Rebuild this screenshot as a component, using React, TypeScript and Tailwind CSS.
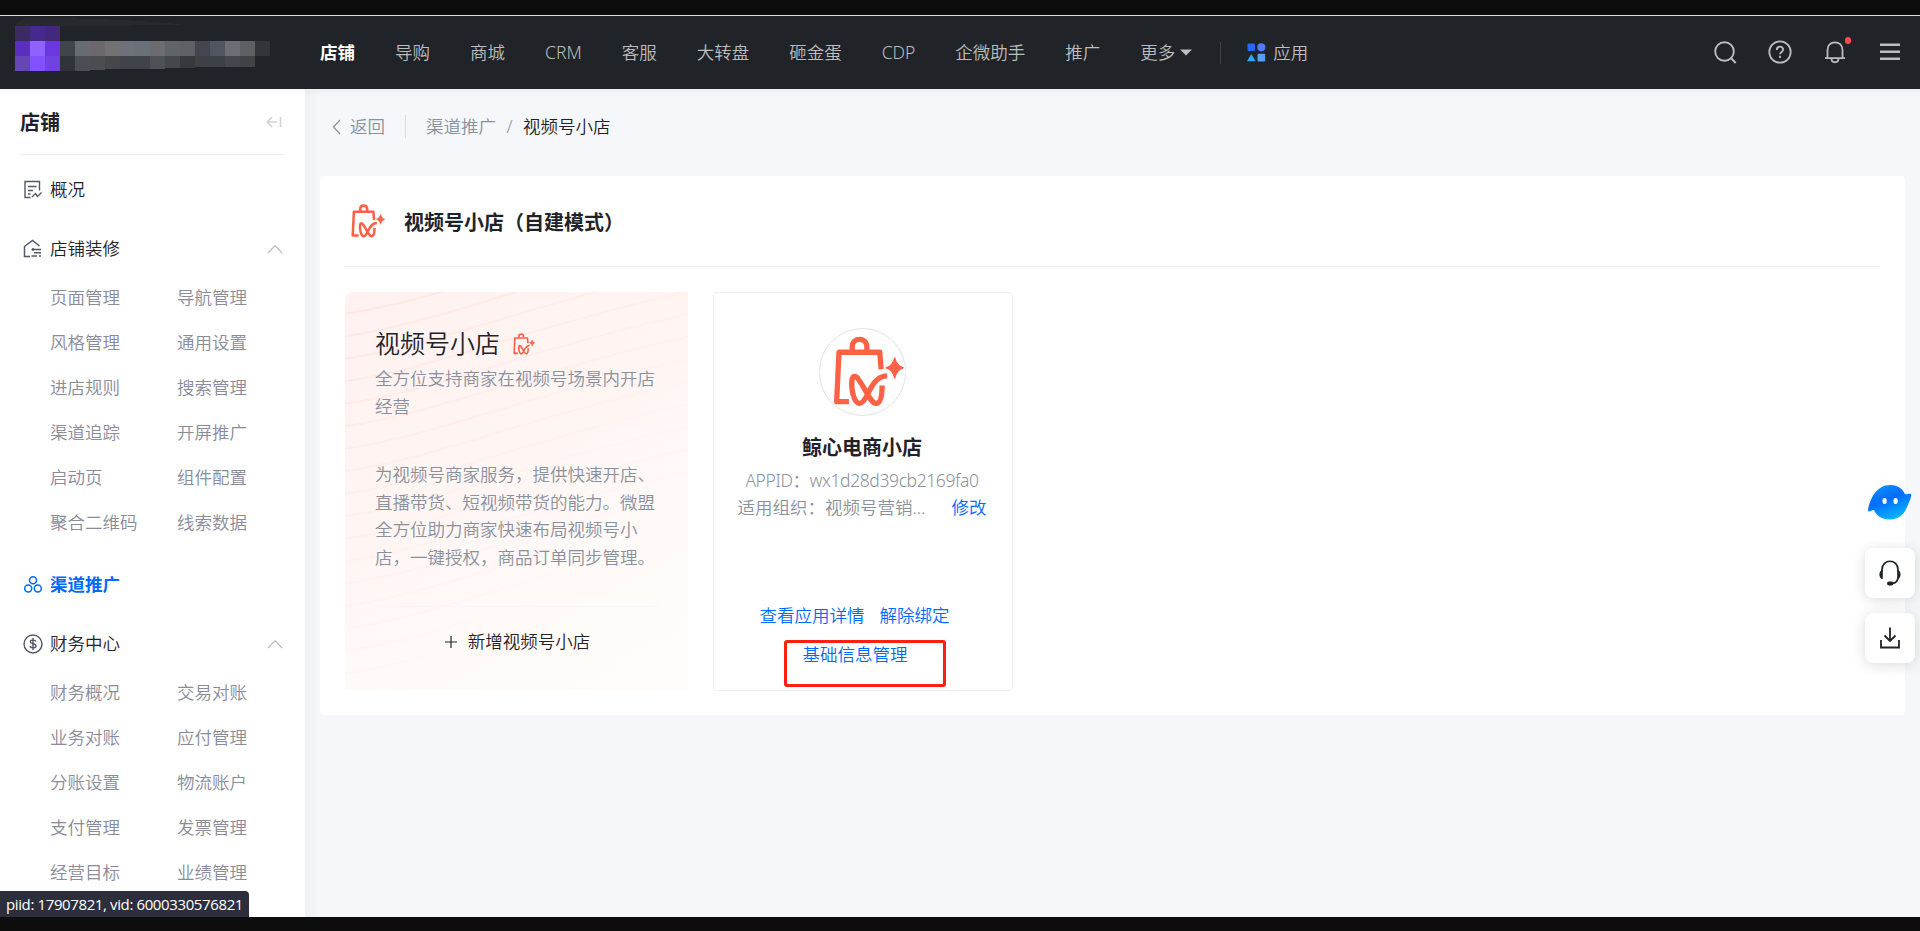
import { clsx } from 'clsx'

const NAV_LEFT = ['店铺', '导购', '商城', 'CRM', '客服', '大转盘', '砸金蛋', 'CDP', '企微助手', '推广']

const SHOP_ITEMS = [
  '页面管理', '导航管理',
  '风格管理', '通用设置',
  '进店规则', '搜索管理',
  '渠道追踪', '开屏推广',
  '启动页', '组件配置',
  '聚合二维码', '线索数据',
]

const FINANCE_ITEMS = [
  '财务概况', '交易对账',
  '业务对账', '应付管理',
  '分账设置', '物流账户',
  '支付管理', '发票管理',
  '经营目标', '业绩管理',
]

// x, y, fill, height
const LOGO_CELLS: [number, number, string, number][] = [
  [0, 0, '#3a2a66', 15], [15, 0, '#46298c', 15], [30, 0, '#42297c', 15],
  [0, 15, '#592ebd', 15], [15, 15, '#8f63ff', 15], [30, 15, '#6b38e0', 15],
  [0, 30, '#6446b8', 15], [15, 30, '#8350ff', 15], [30, 30, '#7042e0', 15],
  [45, 15, '#40454b', 15], [60, 15, '#686b71', 15], [75, 15, '#6c686d', 15], [90, 15, '#737273', 15],
  [105, 15, '#6f717a', 15], [120, 15, '#6b6f77', 15], [135, 15, '#6c6b6f', 15], [150, 15, '#606469', 15],
  [165, 15, '#5f6265', 15], [180, 15, '#43464f', 15], [195, 15, '#50555f', 15], [210, 15, '#6b6e73', 15],
  [225, 15, '#5f6063', 15], [240, 15, '#32353a', 15],
  [45, 30, '#31333b', 15], [60, 30, '#4b4f55', 15], [75, 30, '#4c4d51', 14], [90, 30, '#45474b', 13],
  [105, 30, '#40434a', 13], [120, 30, '#404349', 13], [135, 30, '#4d5054', 13], [150, 30, '#45474a', 12],
  [165, 30, '#36393d', 12], [180, 30, '#3d4045', 11], [195, 30, '#3d4047', 11], [210, 30, '#44474d', 11],
  [225, 30, '#404246', 11],
]

const WAVES = Array.from({ length: 20 }, (_, i) => 22 + i * 22.5)

function BagIcon({ className }: { className?: string }) {
  return (
    <svg viewBox="398 166 214 214" className={className} fill="none" stroke="#ff6146" strokeWidth="16" strokeLinejoin="round">
      <path d="M446 364H409L416 215H539L543 266" />
      <path d="M456 212V198C456 169 500 169 500 198V212" />
      <path d="M561 286C530 286 515 316 503 340C493 360 485 370 477 369C460 367 452 322 455 300C457 284 467 285 475 297C486 312 497 333 507 350C516 364 521 370 529 369C543 367 546 340 546 315" />
      <path d="M584 231Q590 256 611 262Q590 268 584 294Q578 268 557 262Q578 256 584 231Z" fill="#ff6146" stroke="#ff6146" strokeWidth="3" />
    </svg>
  )
}

function Chevron() {
  return (
    <svg width="16" height="10" viewBox="0 0 16 10" fill="none" stroke="#b9bac4" strokeWidth="1.1">
      <path d="M1 9L8 1.5L15 9" />
    </svg>
  )
}

function OverviewIcon() {
  return (
    <svg width="20" height="20" viewBox="0 0 20 20" fill="none" stroke="#55566a" strokeWidth="1.4">
      <path d="M7.5 17.5H2V1.5H16.5V10.5M5 6.5H13.5M5 10.5H10M5 14H7.5" />
      <path d="M9 17L12.5 13.5L14.5 16.5L18.5 12.5" />
    </svg>
  )
}

function HouseIcon() {
  return (
    <svg width="20" height="20" viewBox="0 0 20 20" fill="none" stroke="#55566a" strokeWidth="1.5">
      <path d="M7 17.5H1.5V7.5L9.5 1.5L16.5 7" />
      <path d="M8.5 10.5H18M11 13.8H18M8.5 17H14M16 17H18M10 9V12" />
    </svg>
  )
}

function ChannelIcon() {
  return (
    <svg width="20" height="20" viewBox="0 0 20 20" fill="none" stroke="#006aff" strokeWidth="1.5">
      <circle cx="10" cy="5.3" r="3.5" />
      <circle cx="5.2" cy="13.6" r="3.5" />
      <circle cx="14.8" cy="13.6" r="3.5" />
    </svg>
  )
}

function MoneyIcon() {
  return (
    <svg width="20" height="20" viewBox="0 0 20 20" fill="none" stroke="#55566a" strokeWidth="1.4">
      <circle cx="10" cy="10" r="9" />
      <path d="M13 7.5C12.5 5.8 7.3 5.3 7.3 7.8C7.3 10.3 13 9.2 13 12C13 14.6 7.5 14.3 7 12.2M10 4V16" />
    </svg>
  )
}

function MenuTitle({ icon, label, active, open }: { icon: React.ReactNode; label: string; active?: boolean; open?: boolean }) {
  return (
    <div className="mt-[14px] flex h-[45px] items-center pr-[2px] pl-[3px]">
      {icon}
      <span className={clsx('ml-[7px] flex-1', active ? 'font-bold text-[#006aff]' : 'text-[#1f2329]')}>{label}</span>
      {open && <Chevron />}
    </div>
  )
}

function SubMenu({ items }: { items: string[] }) {
  return (
    <div className="mt-1 grid grid-cols-[127px_1fr] pb-[3px] pl-[30px] text-[#8a8b9b]">
      {items.map(item => <span key={item} className="h-[45px] leading-[45px]">{item}</span>)}
    </div>
  )
}

function Header() {
  return (
    <header className="flex h-[73px] shrink-0 items-center bg-[#202327] text-[17.5px] text-[#bcbdbe]">
      <svg className="-mt-4 ml-[15px] shrink-0" width="270" height="53" viewBox="0 -8 270 53" shapeRendering="crispEdges">
        <path d="M0 0Q6 -8 14 -8Q110 -8 170 -1L60 0Z" fill="#28292c" />
        {LOGO_CELLS.map(([x, y, fill, h]) => <rect key={`${x}-${y}`} x={x} y={y} width="15" height={h} fill={fill} />)}
      </svg>
      <nav className="ml-[35px] flex items-center gap-10 whitespace-nowrap">
        {NAV_LEFT.map((label, i) => (
          <a key={label} className={clsx(i === 0 && 'font-bold text-white')}>{label}</a>
        ))}
        <a className="flex items-center">
          更多
          <svg className="ml-[5px]" width="12" height="7" viewBox="0 0 12 7"><path d="M0 0.5H12L6 6.5Z" fill="#bcbdbe" /></svg>
        </a>
      </nav>
      <div className="ml-7 h-[22px] w-px bg-[#3e4145]" />
      <svg className="ml-[26px]" width="19" height="19" viewBox="0 0 19 19">
        <rect x="0.5" y="0.5" width="7.5" height="7.5" rx="1" fill="#2468ff" />
        <circle cx="14.3" cy="4.3" r="4.1" fill="#4d7dff" />
        <path d="M4.3 11L8.6 18.3H0Z" fill="#2fa8ff" />
        <rect x="10.5" y="10.7" width="7.7" height="7.7" rx="1" fill="#55a0ff" />
      </svg>
      <a className="ml-[7px]">应用</a>

      <div className="mr-5 mb-[2px] ml-auto flex items-center text-[#bcbdbe]">
        <svg width="24" height="24" viewBox="0 0 24 24" fill="none" stroke="currentColor" strokeWidth="1.9">
          <circle cx="11.5" cy="11.5" r="9.3" />
          <path d="M17.5 17.5L22.7 23" />
        </svg>
        <svg className="ml-[31px]" width="24" height="24" viewBox="0 0 24 24" fill="none" stroke="currentColor" strokeWidth="1.8">
          <circle cx="12" cy="12" r="10.7" />
          <path d="M8.8 10C8.8 5.6 15.2 5.8 15.2 9.6C15.2 12 12 11.8 12 14.3M12 15.8V18" />
        </svg>
        <div className="relative ml-[31px]">
          <svg width="24" height="24" viewBox="0 0 24 24" fill="none" stroke="currentColor" strokeWidth="1.8">
            <path d="M2 18.2H22M4.5 18V10C4.5 -0.3 19.5 -0.3 19.5 10V18M8.5 18.5C8.5 23.5 15.5 23.5 15.5 18.5" />
          </svg>
          <span className="absolute -top-[3px] left-[22px] h-[7px] w-[6px] rounded-full bg-[#ff4a4a]" />
        </div>
        <svg className="ml-[33px]" width="20" height="18" viewBox="0 0 20 18" fill="#bcbdbe">
          <path d="M0 0.5H20V3H0ZM0 7.5H20V10H0ZM0 14.5H20V17H0Z" />
        </svg>
      </div>
    </header>
  )
}

function Sidebar() {
  return (
    <aside className="relative w-[305px] shrink-0 overflow-hidden bg-white px-5">
      <div className="flex h-[66px] items-center justify-between border-b border-[#f0f0f3] pr-[3px]">
        <h2 className="pt-[2px] text-xl font-bold text-[#1f2329]">店铺</h2>
        <svg width="16" height="12" viewBox="0 0 16 12" fill="none" stroke="#d3d3d6" strokeWidth="1.7">
          <path d="M11 6H1.5M6 1L1.3 6L6 11M14.5 1V11" />
        </svg>
      </div>
      <div className="-mt-[2px]">
        <MenuTitle icon={<OverviewIcon />} label="概况" />
        <MenuTitle icon={<HouseIcon />} label="店铺装修" open />
        <SubMenu items={SHOP_ITEMS} />
        <MenuTitle icon={<ChannelIcon />} label="渠道推广" active />
        <MenuTitle icon={<MoneyIcon />} label="财务中心" open />
        <SubMenu items={FINANCE_ITEMS} />
      </div>
    </aside>
  )
}

function IntroCard() {
  return (
    <section className="relative h-[398px] w-[343px] overflow-hidden rounded-tl-lg bg-[linear-gradient(150deg,#fff2f0_0%,#fff5f3_40%,#fffaf8_72%,#fffdfb_100%)]">
      <svg className="absolute inset-0" width="343" height="398" viewBox="0 0 343 398" fill="none">
        <defs>
          <linearGradient id="wave" gradientUnits="userSpaceOnUse" x1="0" y1="0" x2="240" y2="300">
            <stop offset="0" stopColor="#ffdfda" stopOpacity="0.6" />
            <stop offset="0.5" stopColor="#ffe4e0" stopOpacity="0.3" />
            <stop offset="1" stopColor="#fff0ee" stopOpacity="0.05" />
          </linearGradient>
        </defs>
        {WAVES.map(y => (
          <path key={y} d={`M-2 ${y}C50 ${y - 7} 110 ${y - 26} 170 ${y - 44}S290 ${y - 78} 345 ${y - 90}`} stroke="url(#wave)" strokeWidth="2.2" />
        ))}
      </svg>
      <div className="relative px-[30px] pt-[31px]">
        <div className="flex h-10 items-center">
          <h3 className="text-[25px] text-[#1f2329]">视频号小店</h3>
          <BagIcon className="mt-[2px] ml-[13px] h-[22px] w-[22px]" />
        </div>
        <p className="mt-[2px] h-[65px] leading-[27.5px] text-[#8a909c]">全方位支持商家在视频号场景内开店经营</p>
        <div className="h-px bg-[#f5f7fc]" />
        <p className="mt-[30px] leading-[27.5px] whitespace-nowrap text-[#8a909c]">
          为视频号商家服务，提供快速开店、<br />
          直播带货、短视频带货的能力。微盟<br />
          全方位助力商家快速布局视频号小<br />
          店，一键授权，商品订单同步管理。
        </p>
        <div className="mt-[35px] flex h-[70px] items-center justify-center border-t border-[#f5f7fc] pl-[2px] text-[#1f2329]">
          <svg className="mr-[11px]" width="12" height="12" viewBox="0 0 12 12" stroke="#1f2329" strokeWidth="1.2"><path d="M6 0V12M0 6H12" /></svg>
          新增视频号小店
        </div>
      </div>
    </section>
  )
}

function ShopCard() {
  return (
    <section className="relative ml-[25px] flex h-[399px] w-[300px] flex-col items-center rounded-sm border border-[#f0f0f2] pr-[2px]">
      <div className="mt-[35px] flex h-[88px] w-[87px] shrink-0 items-center justify-center rounded-full border border-[#e3e3e5]">
        <BagIcon className="-mt-px ml-[12px] h-[71px] w-[71px] shrink-0" />
      </div>
      <h3 className="mt-[17px] text-xl leading-[30px] font-bold text-[#1f2329]">鲸心电商小店</h3>
      <p className="mt-[4px] leading-[27px] tracking-[-0.4px] text-[#8a909c]">APPID：wx1d28d39cb2169fa0</p>
      <p className="flex leading-[27px] whitespace-nowrap text-[#8a909c]">
        <span className="w-[214px]">适用组织：视频号营销...</span>
        <a className="text-[#006aff]">修改</a>
      </p>
      <div className="mt-[81px] mr-[15px] flex gap-[15px] leading-[27px] text-[#006aff]">
        <a>查看应用详情</a>
        <a>解除绑定</a>
      </div>
      <a className="mt-[12px] mr-[14px] leading-[27px] text-[#006aff]">基础信息管理</a>
      <span className="absolute top-[347px] left-[70px] h-[47px] w-[162px] rounded-[3px] border-[3px] border-[#ff1e12]" />
    </section>
  )
}

function FloatTools() {
  return (
    <div className="absolute top-[484px] right-[5px] flex w-[50px] flex-col">
      <svg className="ml-[2px]" width="45" height="36" viewBox="0 0 45 36">
        <defs>
          <linearGradient id="pet" x1="0.2" y1="0.1" x2="0.6" y2="1">
            <stop offset="0" stopColor="#0a8bff" />
            <stop offset="0.4" stopColor="#006cff" />
            <stop offset="1" stopColor="#08b8ff" />
          </linearGradient>
        </defs>
        <path d="M1 26C3 14 10 1 23 1C30 1 35 4 38 10C41 11 43 9 44 10C45 11 43 17 40 23C37 31 31 35.500 22.500 35.500C15 35.500 9.500 32 7 26C5 26 3 28 1.500 27.500Z" fill="url(#pet)" />
        <rect x="15.500" y="14" width="4.200" height="6" rx="2" fill="#fff" />
        <rect x="26.500" y="14" width="4.200" height="6" rx="2" fill="#fff" />
      </svg>
      <button className="mt-7 flex h-[50px] items-center justify-center rounded-lg bg-white shadow-[0_2px_14px_rgba(0,0,0,0.14)]">
        <svg width="24" height="26" viewBox="0 0 24 26" fill="none" stroke="#202327" strokeWidth="1.7">
          <path d="M4 12V9.500C4 -1.500 20 -1.500 20 9.500V12M20 17C20 21.500 18 23.300 14 23.300" />
          <path d="M4.800 10V19C0.500 19 0 10.500 4.800 10ZM19.200 10V19C23.500 19 24 10.500 19.200 10Z" fill="#202327" stroke="none" />
          <rect x="9" y="21.500" width="6.500" height="4" rx="2" fill="#202327" stroke="none" />
        </svg>
      </button>
      <button className="mt-[15px] flex h-[50px] items-center justify-center rounded-lg bg-white shadow-[0_2px_14px_rgba(0,0,0,0.14)]">
        <svg width="20" height="22" viewBox="0 0 20 22" fill="none" stroke="#202327" strokeWidth="1.8">
          <path d="M1 13V20.500H19V13M10 0.500V13.500M4.500 8.500L10 14L15.500 8.500" />
        </svg>
      </button>
    </div>
  )
}

export default function App() {
  return (
    <div className="relative flex h-[931px] w-[1920px] flex-col overflow-hidden bg-[#0d0d0d] font-['Noto_Sans','Noto_Sans_CJK_SC',sans-serif] text-[17.5px] leading-[27px] font-[350]">
      <div className="h-4 shrink-0 border-b border-[#dfdfe0]" />
      <Header />
      <div className="relative flex h-[828px] shrink-0 bg-[#f5f7fb]">
        <Sidebar />
        <main className="flex-1 bg-[linear-gradient(90deg,#eff1f5_0,#f5f7fb_15px)] pr-[15px] pl-[15px]">
          <div className="flex h-[87px] items-start pt-6 pl-3 text-[#8a909c]">
            <svg className="mt-[6px]" width="9" height="16" viewBox="0 0 9 16" fill="none" stroke="#8a909c" strokeWidth="1.2"><path d="M8 1L1.500 8L8 15" /></svg>
            <span className="ml-[9px]">返回</span>
            <span className="mt-[2px] ml-[20px] h-[23px] w-px bg-[#dcdde2]" />
            <span className="ml-[20px]">渠道推广</span>
            <span className="w-[27px] text-center">/</span>
            <span className="text-[#1f2329]">视频号小店</span>
          </div>
          <div className="h-[539px] rounded-sm bg-white px-[25px]">
            <div className="flex h-[91px] items-center border-b border-[#f0f1f5]">
              <BagIcon className="ml-[6px] h-[34px] w-[34px]" />
              <h1 className="ml-[19px] pt-[3px] text-xl font-bold text-[#1f2329]">视频号小店（自建模式）</h1>
            </div>
            <div className="flex pt-[25px]">
              <IntroCard />
              <ShopCard />
            </div>
          </div>
        </main>
        <div className="pointer-events-none absolute inset-x-0 top-0 h-2 bg-gradient-to-b from-black/[0.03] to-transparent" />
      </div>
      <FloatTools />
      <div className="absolute top-[891px] left-0 h-[26px] w-[249px] rounded-tr bg-[#2c2f3b] pl-[6px] font-['Open_Sans',sans-serif] text-[15px] leading-[27px] font-normal tracking-[-0.38px] whitespace-nowrap text-white">
        piid: 17907821, vid: 6000330576821
      </div>
    </div>
  )
}
